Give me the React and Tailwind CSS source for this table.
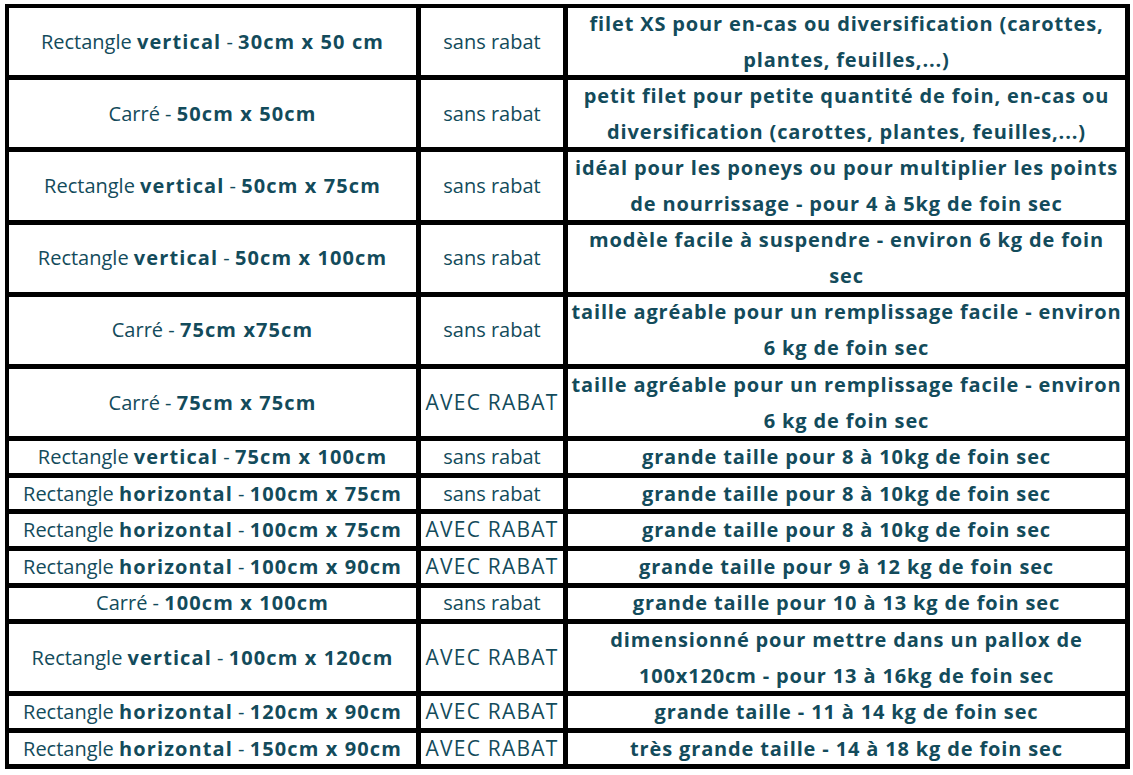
import React from "react";

const rows = [
  { a: ["Rectangle ", "vertical", " - ", "30cm x 50 cm"], b: "sans rabat", c: ["filet XS pour en-cas ou diversification (carottes,", "plantes, feuilles,...)"] },
  { a: ["Carré", "", " - ", "50cm x 50cm"], b: "sans rabat", c: ["petit filet pour petite quantité de foin, en-cas ou", "diversification (carottes, plantes, feuilles,...)"] },
  { a: ["Rectangle ", "vertical", " - ", "50cm x 75cm"], b: "sans rabat", c: ["idéal pour les poneys ou pour multiplier les points", "de nourrissage - pour 4 à 5kg de foin sec"] },
  { a: ["Rectangle ", "vertical", " - ", "50cm x 100cm"], b: "sans rabat", c: ["modèle facile à suspendre - environ 6 kg de foin", "sec"] },
  { a: ["Carré", "", " - ", "75cm x75cm"], b: "sans rabat", c: ["taille agréable pour un remplissage facile - environ", "6 kg de foin sec"] },
  { a: ["Carré", "", " - ", "75cm x 75cm"], b: "AVEC RABAT", c: ["taille agréable pour un remplissage facile - environ", "6 kg de foin sec"] },
  { a: ["Rectangle ", "vertical", " - ", "75cm x 100cm"], b: "sans rabat", c: ["grande taille pour 8 à 10kg de foin sec"] },
  { a: ["Rectangle ", "horizontal", " - ", "100cm x 75cm"], b: "sans rabat", c: ["grande taille pour 8 à 10kg de foin sec"] },
  { a: ["Rectangle ", "horizontal", " - ", "100cm x 75cm"], b: "AVEC RABAT", c: ["grande taille pour 8 à 10kg de foin sec"] },
  { a: ["Rectangle ", "horizontal", " - ", "100cm x 90cm"], b: "AVEC RABAT", c: ["grande taille pour 9 à 12 kg de foin sec"] },
  { a: ["Carré", "", " - ", "100cm x 100cm"], b: "sans rabat", c: ["grande taille pour 10 à 13 kg de foin sec"] },
  { a: ["Rectangle ", "vertical", " - ", "100cm x 120cm"], b: "AVEC RABAT", c: ["dimensionné pour mettre dans un pallox de", "100x120cm - pour 13 à 16kg de foin sec"] },
  { a: ["Rectangle ", "horizontal", " - ", "120cm x 90cm"], b: "AVEC RABAT", c: ["grande taille - 11 à 14 kg de foin sec"] },
  { a: ["Rectangle ", "horizontal", " - ", "150cm x 90cm"], b: "AVEC RABAT", c: ["très grande taille - 14 à 18 kg de foin sec"] },
];

export default function App() {
  return (
    <div className="min-h-screen bg-white pl-[5px] pt-[4px] text-[#134b5b]" style={{ fontFamily: "'Open Sans', Lato, sans-serif" }}>
      <div className="grid w-[1125px] grid-cols-[407px_142px_557px] grid-rows-[67.2px_67.2px_67.2px_67.2px_67.2px_67.2px_31.6px_31.6px_31.6px_31.6px_31.6px_67.2px_31.6px_31.6px] gap-[5px] bg-black pt-[4px] pl-[4px] pr-[5px] pb-[5px]">
        {rows.map((r, i) => (
          <React.Fragment key={i}>
            <div className="flex items-center justify-center whitespace-nowrap bg-white text-center text-[20px]">
              <span>
                <span className="font-normal">{r.a[0]}</span>
                {r.a[1] && <span className="font-bold tracking-[1.1px]">{r.a[1]}</span>}
                <span className="font-normal">{r.a[2]}</span>
                <span className="font-bold tracking-[1.1px]">{r.a[3]}</span>
              </span>
            </div>
            <div className="flex items-center justify-center whitespace-nowrap bg-white text-center text-[20px]">
              {r.b === "AVEC RABAT" ? (
                <span className="text-[21px] tracking-[1.2px]">{r.b}</span>
              ) : (
                <span>{r.b}</span>
              )}
            </div>
            <div className="flex items-center justify-center bg-white text-center text-[20px] font-bold leading-[36px] tracking-[0.85px]">
              <div>
                {r.c.map((l, j) => (
                  <div key={j} className="whitespace-nowrap">{l}</div>
                ))}
              </div>
            </div>
          </React.Fragment>
        ))}
      </div>
    </div>
  );
}
